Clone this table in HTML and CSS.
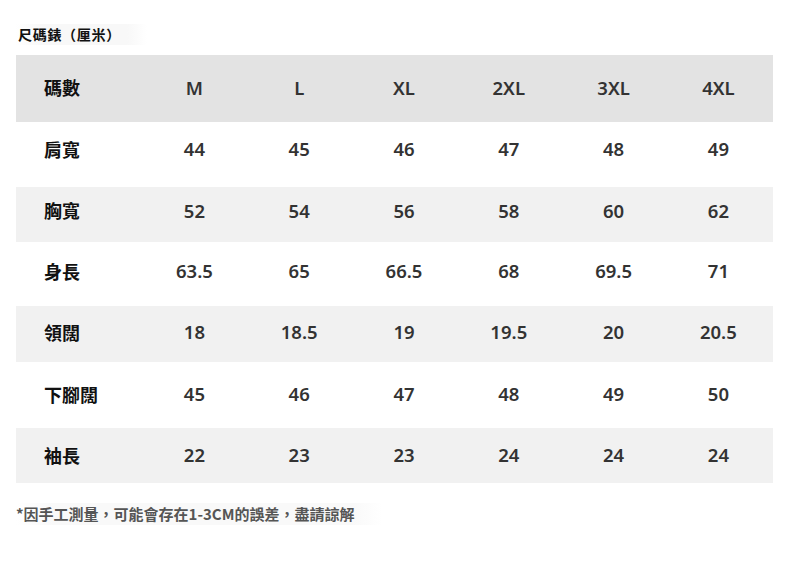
FILE: index.html
```html
<!DOCTYPE html>
<html lang="zh-Hant">
<head>
<meta charset="utf-8">
<title>尺碼錶</title>
<link rel="stylesheet" href="styles.css">
</head>
<body>
<div class="page">
  <div class="title">尺碼錶（厘米）</div>
  <div class="table">
    <div class="row head r0">
      <div class="label">碼數</div><div>M</div><div>L</div><div>XL</div><div>2XL</div><div>3XL</div><div>4XL</div>
    </div>
    <div class="row r1">
      <div class="label">肩寬</div><div>44</div><div>45</div><div>46</div><div>47</div><div>48</div><div>49</div>
    </div>
    <div class="row alt r2">
      <div class="label">胸寬</div><div>52</div><div>54</div><div>56</div><div>58</div><div>60</div><div>62</div>
    </div>
    <div class="row r3">
      <div class="label">身長</div><div>63.5</div><div>65</div><div>66.5</div><div>68</div><div>69.5</div><div>71</div>
    </div>
    <div class="row alt r4">
      <div class="label">領闊</div><div>18</div><div>18.5</div><div>19</div><div>19.5</div><div>20</div><div>20.5</div>
    </div>
    <div class="row r5">
      <div class="label">下腳闊</div><div>45</div><div>46</div><div>47</div><div>48</div><div>49</div><div>50</div>
    </div>
    <div class="row alt r6">
      <div class="label">袖長</div><div>22</div><div>23</div><div>23</div><div>24</div><div>24</div><div>24</div>
    </div>
  </div>
  <div class="note">*因手工測量，可能會存在1-3CM的誤差，盡請諒解</div>
</div>
</body>
</html>
```

FILE: styles.css
```css
* { box-sizing: border-box; }
html, body { margin: 0; padding: 0; background: #ffffff; }
body {
  font-family: "Noto Sans", "Noto Sans CJK TC", sans-serif;
  width: 790px;
  height: 564px;
  overflow: hidden;
}
.page {
  padding: 24px 17px 0 16px;
}
.title {
  width: fit-content;
  font-family: "Noto Sans CJK TC", sans-serif;
  font-weight: 700;
  font-size: 14px;
  letter-spacing: 0.7px;
  line-height: 21px;
  color: #111111;
  padding: 0 26px 0 2px;
  background: linear-gradient(90deg, #ffffff 0%, #f8f8f8 20%, #f8f8f8 85%, #ffffff 100%);
}
.table {
  margin-top: 10px;
  width: 757px;
}
.row {
  display: grid;
  grid-template-columns: 126px repeat(6, 104.8px) 2px;
  align-items: center;
  font-size: 18.5px;
  font-weight: 600;
  color: #333333;
}
.row > div { text-align: center; }
.row > .label {
  text-align: left;
  padding-left: 28px;
  font-family: "Noto Sans CJK TC", sans-serif;
  font-weight: 700;
  font-size: 18px;
  color: #111111;
}
.head { background: #e3e3e3; }
.alt { background: #f1f1f1; }
.r0 { height: 67px; padding-bottom: 3px; }
.r1 { height: 65px; padding-bottom: 12px; }
.r2 { height: 55px; padding-bottom: 9px; }
.r3 { height: 64px; padding-bottom: 7px; }
.r4 { height: 56px; padding-bottom: 5px; }
.r5 { height: 66px; padding-bottom: 3px; }
.r6 { height: 55px; padding-bottom: 2px; }
.note {
  width: fit-content;
  margin-top: 20px;
  font-family: "Noto Sans CJK TC", sans-serif;
  font-weight: 700;
  font-size: 15px;
  line-height: 22px;
  color: #555555;
  padding-right: 27px;
  background: linear-gradient(90deg, #ffffff 0%, #f9f9f9 10%, #f9f9f9 92%, #ffffff 100%);
}
```
